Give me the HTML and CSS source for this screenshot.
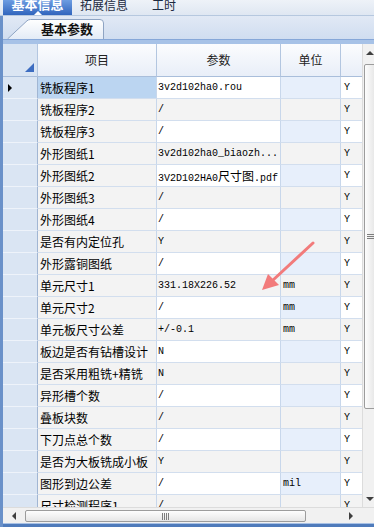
FILE: index.html
```html
<!DOCTYPE html>
<html lang="zh-CN">
<head>
  <meta charset="UTF-8">
  <meta name="viewport" content="width=device-width, initial-scale=1.0">
  <title>基本信息</title>

  <link rel="stylesheet" href="styles.css">
</head>
<body>
  <div class="window">
    <div class="top-tabs">
      <div class="top-tab active">
        <span>基本信息</span>
        <i class="caret"></i>
      </div>
      <div class="top-tab">拓展信息</div>
      <div class="top-tab last">工时</div>
    </div>

    <div class="panel">
      <div class="sub-tabs">
        <div class="sub-tab">
          <svg width="98" height="20" viewBox="0 0 98 20">
            <defs>
              <linearGradient id="tabFill" x1="0" y1="0" x2="0" y2="1">
                <stop offset="0" stop-color="#ffffff"/>
                <stop offset="1" stop-color="#e3ebf6"/>
              </linearGradient>
            </defs>
            <path d="M0.5,20 L20,1.8 Q21.5,0.5 23.5,0.5 L93,0.5 Q96.5,0.5 96.5,4 L96.5,20" fill="url(#tabFill)" stroke="#8ea4c3" stroke-width="1"/>
          </svg>
          <span class="sub-tab-label">基本参数</span>
        </div>
      </div>
      <div class="band"></div>

      <div class="grid">
        <div class="grid-view">
          <div class="row header">
            <div class="cell cell-head corner-cell"><i class="corner-mark"></i></div>
            <div class="cell">项目</div>
            <div class="cell">参数</div>
            <div class="cell">单位</div>
            <div class="cell"></div>
          </div>
          <div id="rows"></div>
        </div>

        <div class="vscroll">
          <div class="sb-btn"><i class="arrow up"></i></div>
          <div class="sb-track">
            <div class="sb-thumb v"><i class="grip v"></i></div>
          </div>
          <div class="sb-btn"><i class="arrow down"></i></div>
        </div>

        <div class="hscroll">
          <div class="sb-btn h"><i class="arrow left"></i></div>
          <div class="sb-thumb h"><i class="grip h"></i></div>
          <div class="sb-fill"></div>
          <div class="sb-btn h"><i class="arrow right"></i></div>
        </div>
        <div class="sb-corner"></div>
      </div>

      <div class="bottom-edge"></div>
    </div>

    <!-- red annotation arrow drawn over the grid -->
    <svg class="annotation" width="374" height="527" viewBox="0 0 374 527">
      <line x1="313" y1="243" x2="272" y2="281" stroke="#f27b7b" stroke-width="3" stroke-linecap="round"/>
      <polygon points="262,290 268,274 279,285" fill="#f27b7b"/>
    </svg>
  </div>

<script>
  const params = [
    { name: '铣板程序1', value: '3v2d102ha0.rou', unit: '' },
    { name: '铣板程序2', value: '/', unit: '' },
    { name: '铣板程序3', value: '/', unit: '' },
    { name: '外形图纸1', value: '3v2d102ha0_biaozh...', unit: '' },
    { name: '外形图纸2', value: '3V2D102HA0<span class="cjk">尺寸图</span>.pdf', unit: '' },
    { name: '外形图纸3', value: '/', unit: '' },
    { name: '外形图纸4', value: '/', unit: '' },
    { name: '是否有内定位孔', value: 'Y', unit: '' },
    { name: '外形露铜图纸', value: '/', unit: '' },
    { name: '单元尺寸1', value: '331.18X226.52', unit: 'mm' },
    { name: '单元尺寸2', value: '/', unit: 'mm' },
    { name: '单元板尺寸公差', value: '+/-0.1', unit: 'mm' },
    { name: '板边是否有钻槽设计', value: 'N', unit: '' },
    { name: '是否采用粗铣+精铣', value: 'N', unit: '' },
    { name: '异形槽个数', value: '/', unit: '' },
    { name: '叠板块数', value: '/', unit: '' },
    { name: '下刀点总个数', value: '/', unit: '' },
    { name: '是否为大板铣成小板', value: 'Y', unit: '' },
    { name: '图形到边公差', value: '/', unit: 'mil' },
    { name: '尺寸检测程序1', value: '/', unit: '' },
  ];

  const paramGrid = {
    container: null,
    items: [],

    init() {
      this.container = document.querySelector('#rows');
      this.items = params;
      this.render();
    },

    render() {
      this.container.innerHTML = this.items.reduce((acc, item, index) => {
        acc += this.getTemplate(item, index);
        return acc;
      }, '');
    },

    getTemplate(item, index) {
      const { name, value, unit } = item;
      const selected = index === 0;
      return `
        <div class="row">
          <div class="cell cell-head">${ selected ? '<i class="pointer"></i>' : '' }</div>
          <div class="cell cell-key${ selected ? ' selected' : '' }">${ name }</div>
          <div class="cell cell-val">${ value }</div>
          <div class="cell cell-unit">${ unit }</div>
          <div class="cell cell-flag">Y</div>
        </div>
      `;
    }
  };

  paramGrid.init();
</script>
</body>
</html>
```

FILE: styles.css
```css
body {
  margin: 0;
  overflow: hidden;
  background: #ffffff;
  font-family: "Noto Sans CJK SC", sans-serif;
  font-size: 12px;
  color: #000000;
}

.window {
  position: relative;
  width: 377px;
  height: 527px;
  display: flex;
  flex-direction: column;
}

/* top tab strip */
.top-tabs {
  height: 16px;
  box-sizing: border-box;
  display: flex;
  padding-left: 3px;
  background: linear-gradient(#eef2f8, #dfe7f2);
  border-bottom: 1px solid #b6c8df;
}

.top-tab {
  height: 15px;
  line-height: 12px;
  margin-left: 8px;
  color: #1c2a40;
  font-size: 12px;
  overflow: hidden;
}
.top-tab.last {
  margin-left: 24px;
}

.top-tab.active {
  width: 69px;
  margin-left: 0;
  display: flex;
  flex-direction: column;
  align-items: center;
  justify-content: space-between;
  background: linear-gradient(#6d9de2, #3165bd);
  color: #ffffff;
  font-weight: bold;
  font-size: 13px;
}
.top-tab span {
  display: block;
  margin-top: -4px;
  line-height: 15px;
}
.top-tab:not(.active) {
  margin-top: -3px;
  height: 18px;
  line-height: 15px;
}

.caret {
  width: 0;
  height: 0;
  border-left: 4px solid transparent;
  border-right: 4px solid transparent;
  border-bottom: 4px solid #ffffff;
}

/* panel with sub tabs and grid */
.panel {
  flex: 1;
  display: flex;
  flex-direction: column;
  border-left: 3px solid #6a91c9;
}

.sub-tabs {
  height: 23px;
  display: flex;
  align-items: flex-end;
  padding-left: 4px;
  background: linear-gradient(#e1e9f5, #d0ddf0);
}

.sub-tab {
  display: grid;
}
.sub-tab > * {
  grid-area: 1 / 1;
}
.sub-tab-label {
  padding-left: 24px;
  width: 72px;
  text-align: center;
  line-height: 20px;
  font-size: 13px;
  font-weight: bold;
  color: #111111;
}

.band {
  height: 5px;
  box-sizing: border-box;
  background: #a7c2e7;
  border-top: 1px solid #86a7d8;
}

.grid {
  display: grid;
  grid-template-columns: 359px 15px;
  grid-template-rows: 463px 16px;
}

.grid-view {
  overflow: hidden;
  background: #ffffff;
}

.row {
  display: grid;
  grid-template-columns: 35px 119px 124px 60px 40px;
  width: 378px;
  height: 22px;
}

.cell {
  box-sizing: border-box;
  border-right: 1px solid #c8d7eb;
  border-bottom: 1px solid #d2deee;
  padding-left: 2px;
  line-height: 21px;
  white-space: nowrap;
  overflow: hidden;
  color: #000000;
}

.row.header {
  height: 33px;
  background: linear-gradient(#fbfcfe, #e8eef8);
}
.row.header .cell {
  padding-left: 0;
  line-height: 32px;
  text-align: center;
  color: #222222;
  border-right-color: #b3c6e0;
  border-bottom-color: #a9bedb;
}

.cell-head {
  background: #dae5f3;
  border-bottom-color: #eef3fa;
  border-right-color: #a1b6d3;
  display: flex;
  align-items: center;
  padding-left: 5px;
}
.corner-cell {
  align-items: flex-end;
  justify-content: flex-end;
  padding: 0 3px 4px 0;
}

.corner-mark {
  width: 0;
  height: 0;
  border-left: 9px solid transparent;
  border-bottom: 9px solid #3d6dc1;
}

.pointer {
  width: 0;
  height: 0;
  border-top: 4px solid transparent;
  border-bottom: 4px solid transparent;
  border-left: 4px solid #000000;
}

.cell-key {
  background: #f3f3f3;
}
.cell-key.selected {
  background: #bbd5f1;
}

.cell-val,
.cell-unit,
.cell-flag {
  font-family: "Liberation Mono", "Noto Sans CJK SC", monospace;
  font-size: 10px;
  padding-left: 1px;
}
.cell-unit {
  background: #e7effb;
  padding-left: 2px;
}
.cell-flag {
  padding-left: 3px;
}

.row:nth-child(even) .cell-val,
.row:nth-child(even) .cell-unit,
.row:nth-child(even) .cell-flag {
  background: #f3f3f3;
}

.cjk {
  font-family: "Noto Sans CJK SC", sans-serif;
  font-size: 12px;
}

/* scroll bars */
.vscroll {
  display: flex;
  flex-direction: column;
  background: #f1f1f1;
  border-left: 1px solid #dcdcdc;
}
.sb-btn {
  height: 17px;
  display: flex;
  align-items: center;
  justify-content: center;
}
.sb-btn.h {
  height: auto;
  width: 22px;
}
.sb-track {
  flex: 1;
  padding-top: 3px;
}
.sb-thumb {
  box-sizing: border-box;
  border: 1px solid #9c9c9c;
  border-radius: 2px;
  display: flex;
  align-items: center;
  justify-content: center;
}
.sb-thumb.v {
  height: 345px;
  margin: 0 1px;
  background: linear-gradient(90deg, #fdfdfd, #e6e6e6);
}
.sb-thumb.h {
  width: 281px;
  margin: 2px 0 1px;
  background: linear-gradient(#fdfdfd, #e6e6e6);
}

.grip.v {
  width: 7px;
  height: 5px;
  background: repeating-linear-gradient(#7d7d7d 0 1px, transparent 1px 2px);
}
.grip.h {
  width: 7px;
  height: 7px;
  background: repeating-linear-gradient(90deg, #7d7d7d 0 1px, transparent 1px 2px);
}

.hscroll {
  display: flex;
  background: #f1f1f1;
  border-top: 1px solid #dcdcdc;
}
.sb-fill {
  flex: 1;
}
.sb-corner {
  background: #f1f1f1;
  border-top: 1px solid #dcdcdc;
}

.arrow {
  width: 0;
  height: 0;
}
.arrow.up {
  border-left: 4px solid transparent;
  border-right: 4px solid transparent;
  border-bottom: 4px solid #3f3f3f;
}
.arrow.down {
  border-left: 4px solid transparent;
  border-right: 4px solid transparent;
  border-top: 4px solid #3f3f3f;
}
.arrow.left {
  border-top: 4px solid transparent;
  border-bottom: 4px solid transparent;
  border-right: 4px solid #3f3f3f;
}
.arrow.right {
  border-top: 4px solid transparent;
  border-bottom: 4px solid transparent;
  border-left: 4px solid #3f3f3f;
}

.bottom-edge {
  height: 4px;
  box-sizing: border-box;
  background: #4f7bbb;
  border-top: 1px solid #a8c1e5;
}

.annotation {
  position: absolute;
  left: 0;
  top: 0;
  pointer-events: none;
}
```
